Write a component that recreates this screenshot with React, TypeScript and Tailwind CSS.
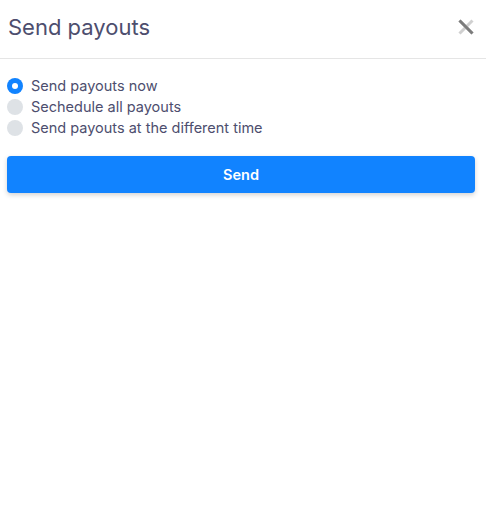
import React from "react";

export default function App() {
  const options = [
    { label: "Send payouts now", checked: true },
    { label: "Sechedule all payouts", checked: false },
    { label: "Send payouts at the different time", checked: false },
  ];
  return (
    <div className="w-[486px] h-[518px] bg-white" style={{ fontFamily: "Inter, 'Noto Sans', sans-serif" }}>
      <div className="flex items-center justify-between h-[59px] pl-2 pr-[11px] border-b border-[#e5e5e5]">
        <h1 className="text-[22px] leading-none text-[#4d4e6e] mt-[-4px]">Send payouts</h1>
        <svg width="18" height="18" viewBox="0 0 18 18" className="mt-[-5px]">
          <line x1="2.5" y1="2.5" x2="15.5" y2="15.5" stroke="#d0d0d0" strokeWidth="3" />
          <line x1="15.5" y1="2.5" x2="2.5" y2="15.5" stroke="#d0d0d0" strokeWidth="3" />
          <line x1="2.5" y1="2.5" x2="15.5" y2="15.5" stroke="#7c7c7c" strokeWidth="3" />
        </svg>
      </div>
      <div className="pl-[7px] pr-[11px] pt-[19px]">
        <div className="flex flex-col gap-[5px]">
          {options.map((o) => (
            <label key={o.label} className="flex items-center gap-2 h-4">
              {o.checked ? (
                <span className="w-4 h-4 shrink-0 rounded-full bg-[#1183ff] flex items-center justify-center">
                  <span className="w-[6px] h-[6px] rounded-full bg-white" />
                </span>
              ) : (
                <span className="w-4 h-4 shrink-0 rounded-full bg-[#dee2e6]" />
              )}
              <span className="text-[14.5px] text-[#4d4e6e] leading-none">{o.label}</span>
            </label>
          ))}
        </div>
        <button className="mt-[20px] w-full h-[37px] rounded-[4px] bg-[#1183ff] text-white text-[14.5px] font-semibold shadow-[0_2px_5px_rgba(0,0,0,0.18)]">
          Send
        </button>
      </div>
    </div>
  );
}
